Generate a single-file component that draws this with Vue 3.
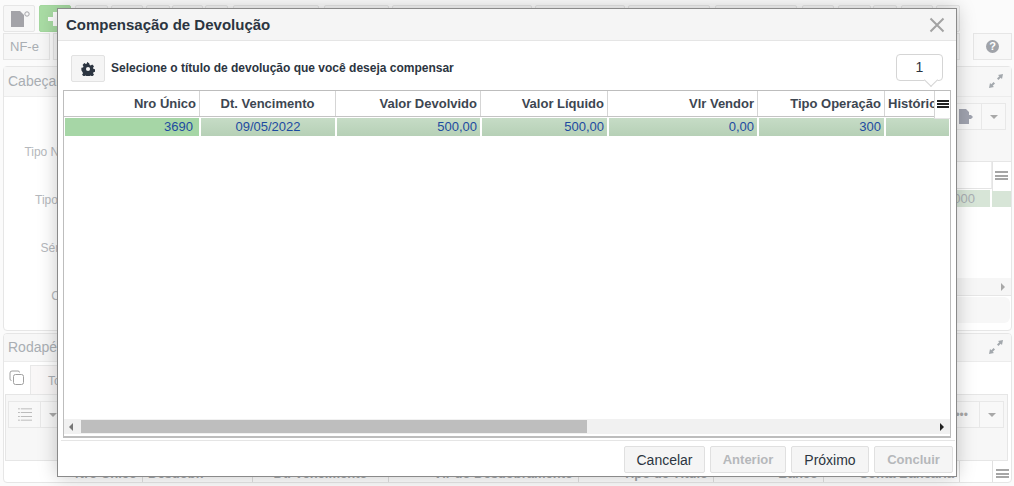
<script setup>
const edges = [
  [75, 108], [111, 143], [146, 170], [172, 203], [205, 228], [233, 319], [324, 389], [392, 532],
  [535, 625], [628, 710], [715, 797], [802, 834], [838, 871], [873, 897], [901, 933], [936, 960]
]
const topButtons = edges.map(([start, end], i) => ({
  width: end - start,
  gap: start - (i ? edges[i - 1][1] : 71)
}))
const labels = ['Tipo Negociação', 'Tipo Operação', 'Série da Nota', 'Cód. Banco']
const footerColumns = [
  { label: 'Nro Único', width: 139, align: 'right' },
  { label: 'Desdobr.', width: 110, align: 'left' },
  { label: 'Dt. Vencimento', width: 136, align: 'center' },
  { label: 'Vlr do Desdobramento', width: 190, align: 'right' },
  { label: 'Tipo de Título', width: 135, align: 'right' },
  { label: 'Banco', width: 110, align: 'right' },
  { label: 'Conta Bancária', width: 136, align: 'right' },
  { label: '', width: 33, align: 'left' }
]
const columns = [
  { label: 'Nro Único', value: '3690', width: 136, align: 'right', first: true },
  { label: 'Dt. Vencimento', value: '09/05/2022', width: 136, align: 'center' },
  { label: 'Valor Devolvido', value: '500,00', width: 145, align: 'right' },
  { label: 'Valor Líquido', value: '500,00', width: 127, align: 'right' },
  { label: 'Vlr Vendor', value: '0,00', width: 150, align: 'right' },
  { label: 'Tipo Operação', value: '300', width: 127, align: 'right' },
  { label: 'Histórico', value: '', width: 65, align: 'left' }
]
const actions = [
  { label: 'Cancelar', width: 81 },
  { label: 'Anterior', width: 76, disabled: true },
  { label: 'Próximo', width: 78 },
  { label: 'Concluir', width: 79, disabled: true }
]
</script>

<template>
  <div class="page">
    <div class="backdrop">
      <div class="top-row">
        <button class="tool doc-tool">
          <svg width="22" height="18" viewBox="0 0 22 18"><path d="M1 1h9l4 4v12H1z" fill="#a3a3a8" /><circle cx="17" cy="4" r="2.2" fill="none" stroke="#a3a3a8" stroke-width="1" /></svg>
        </button>
        <button class="tool add-tool"><span class="plus"></span></button>
        <button
          v-for="(b, i) in topButtons"
          :key="i"
          class="tool"
          :style="{ width: b.width + 'px', marginLeft: b.gap + 'px' }"
        ></button>
      </div>
      <div class="nf-row">
        <span class="nf-tab">NF-e</span>
        <span class="nf-fill">
          <svg width="16" height="16" viewBox="0 0 16 16" fill="none" stroke="#a3a3a8" stroke-width="2"><circle cx="8" cy="8" r="6" /></svg>
        </span>
        <button class="help-btn"><span class="help">?</span></button>
      </div>

      <section class="panel head-panel">
        <header class="panel-title">
          <span>Cabeçalho</span>
          <svg class="expand" width="14" height="14" viewBox="0 0 14 14"><path d="M14 0l-5 1 1.300 1.300L8 4.600 9.400 6l2.300-2.300L13 5zM0 14l5-1-1.300-1.300L6 9.400 4.600 8l-2.300 2.300L1 9z" fill="#a3a8ad" /></svg>
        </header>
        <div class="head-body">
          <div class="labels">
            <span v-for="label in labels" :key="label">{{ label }}</span>
          </div>
          <div class="head-right">
            <div class="side-tools">
              <div class="split-btn">
                <svg width="15" height="15" viewBox="0 0 15 15"><path d="M1 0h7l3 3v3h2l2 2-2 2h-2v5H1z" fill="#a0a3af" /></svg>
                <i class="divider"></i>
                <span class="caret"></span>
              </div>
            </div>
            <div class="side-head">
              <span class="side-blank"></span>
              <span class="side-menu"><span class="bars"></span></span>
            </div>
            <div class="side-row"><span>000</span><i></i></div>
            <div class="side-space"></div>
            <div class="side-scroll"><span class="side-arrow"></span></div>
            <div class="side-foot"></div>
          </div>
        </div>
      </section>

      <section class="panel foot-panel">
        <header class="panel-title short">
          <span>Rodapé</span>
          <svg class="expand" width="14" height="14" viewBox="0 0 14 14"><path d="M14 0l-5 1 1.300 1.300L8 4.600 9.400 6l2.300-2.300L13 5zM0 14l5-1-1.300-1.300L6 9.400 4.600 8l-2.300 2.300L1 9z" fill="#a3a8ad" /></svg>
        </header>
        <div class="tabs">
          <svg width="16" height="16" viewBox="0 0 16 16" fill="none" stroke="#a0a0a0"><rect x="4.500" y="4.500" width="10" height="10" rx="2" /><path d="M2.500 10.500A1.500 1.500 0 0 1 1 9V3a2 2 0 0 1 2-2h6a1.500 1.500 0 0 1 1.500 1.500" /></svg>
          <span class="tab">Todos</span>
        </div>
        <div class="foot-tools">
          <div class="split-btn list-btn">
            <svg width="15" height="13" viewBox="0 0 15 13" fill="#a8a8a8"><path d="M0 0h2v1H0zM3 0h12v1H3zM0 4h2v1H0zM3 4h12v1H3zM0 8h2v1H0zM3 8h12v1H3zM0 12h2v1H0zM3 12h12v1H3z" /></svg>
            <i class="divider"></i>
            <span class="caret"></span>
          </div>
          <div class="split-btn more-btn">
            <span class="dots">•••</span>
            <i class="divider"></i>
            <span class="caret"></span>
          </div>
        </div>
        <div class="foot-head">
          <span
            v-for="c in footerColumns"
            :key="c.label"
            class="foot-col"
            :class="'a-' + c.align"
            :style="{ width: c.width + 'px' }"
          >{{ c.label }}</span>
          <span class="foot-menu"><span class="bars"></span></span>
        </div>
      </section>
    </div>

    <div class="modal">
      <header class="modal-head">
        <h1>Compensação de Devolução</h1>
        <svg class="close" width="16" height="16" viewBox="0 0 16 16" fill="none" stroke="#a3a3a3" stroke-width="2"><path d="M1.500 1.500l13 13M14.500 1.500l-13 13" /></svg>
      </header>
      <div class="modal-body">
        <div class="intro">
          <button class="gear-btn">
            <svg width="14" height="14" viewBox="0 0 24 24"><path fill-rule="evenodd" fill="#2c3541" d="M14.500 1l.7 3.300 2 .8 2.900-1.800 3.500 3.500-1.800 2.900.8 2 3.300.7v5l-3.300.7-.8 2 1.800 2.900-3.500 3.500-2.900-1.800-2 .8-.7 3.300h-5l-.7-3.300-2-.8-2.900 1.800-3.500-3.500 1.800-2.900-.8-2L-1 14.500v-5l3.300-.7.800-2L1.300 3.900 4.800.4l2.900 1.800 2-.8.7-3.300zM12 8a4 4 0 1 0 0 8 4 4 0 0 0 0-8z" transform="translate(1.500 1.500) scale(.88)" /></svg>
          </button>
          <span class="intro-text">Selecione o título de devolução que você deseja compensar</span>
          <div class="count">1</div>
        </div>

        <div class="grid">
          <div class="grid-head">
            <div v-for="c in columns" :key="c.label" class="hcell" :class="'a-' + c.align" :style="{ width: c.width + 'px' }">{{ c.label }}</div>
            <div class="grid-menu"><span class="bars dark"></span></div>
          </div>
          <div class="grid-row">
            <div v-for="c in columns" :key="c.label" class="cell" :class="['a-' + c.align, { first: c.first }]" :style="{ width: c.width + 'px' }">{{ c.value }}</div>
          </div>
          <div class="grid-space"></div>
          <div class="scrollbar">
            <span class="arrow left"></span>
            <div class="track"><div class="thumb"></div></div>
            <span class="arrow right"></span>
          </div>
        </div>

        <footer class="actions">
          <button v-for="a in actions" :key="a.label" class="action" :class="{ disabled: a.disabled }" :style="{ width: a.width + 'px' }">{{ a.label }}</button>
        </footer>
      </div>
    </div>
  </div>
</template>

<style>
html, body { margin: 0; padding: 0; background: #fff; overflow: hidden; }
</style>

<style scoped>
.page {
  position: relative;
  width: 1014px;
  height: 486px;
  overflow: hidden;
  background: #fbfbfb;
  font-family: "Liberation Sans", Arial, sans-serif;
  color: #2c3541;
}
button { font-family: inherit; padding: 0; }

/* dimmed page behind the dialog */
.backdrop {
  display: flex;
  flex-direction: column;
  height: 486px;
  padding: 5px 2px 3px 3px;
  box-sizing: border-box;
  color: #a9aeb3;
}
.top-row { display: flex; height: 28px; flex: none; }
.tool {
  flex: none;
  width: 32px;
  height: 27px;
  box-sizing: border-box;
  border: 1px solid #e6e6e6;
  border-radius: 2px;
  background: #f7f7f7;
  display: flex;
  align-items: center;
  justify-content: center;
}
.doc-tool { padding-left: 3px; }
.add-tool { background: #a9dca4; border-color: #a4d89f; margin-left: 4px; }
.plus {
  width: 14px;
  height: 14px;
  background:
    linear-gradient(#fff, #fff) center / 14px 4px no-repeat,
    linear-gradient(#fff, #fff) center / 4px 14px no-repeat;
}
.nf-row { display: flex; gap: 3px; height: 27px; flex: none; }
.nf-tab {
  width: 47px;
  height: 27px;
  box-sizing: border-box;
  border: 1px solid #e6e6e6;
  background: #f7f7f7;
  padding-left: 6px;
  font-size: 13px;
  line-height: 25px;
}
.nf-fill {
  flex: 1;
  margin-right: 10px;
  border: 1px solid #e6e6e6;
  height: 27px;
  box-sizing: border-box;
  background: #f7f7f7;
  display: flex;
  align-items: center;
  justify-content: flex-end;
  padding-right: 1px;
}
.help-btn {
  width: 39px;
  height: 27px;
  box-sizing: border-box;
  border: 1px solid #e6e6e6;
  background: #f8f8f8;
  display: flex;
  align-items: center;
  justify-content: center;
}
.help {
  width: 13px;
  height: 13px;
  border-radius: 50%;
  background: #a0a3a9;
  color: #fff;
  font-size: 11px;
  font-weight: 700;
  line-height: 13px;
  text-align: center;
}
.panel {
  border: 1px solid #e6e6e6;
  border-radius: 4px;
  background: #fff;
  box-sizing: border-box;
}
.panel-title {
  height: 30px;
  flex: none;
  box-sizing: border-box;
  background: #f7f7f7;
  border-bottom: 1px solid #ececec;
  padding: 0 8px 2px 4px;
  display: flex;
  align-items: center;
  justify-content: space-between;
  font-size: 14px;
}
.head-panel { height: 265px; margin-top: 6px; display: flex; flex-direction: column; }
.head-body { flex: 1; min-height: 0; display: flex; justify-content: space-between; }
.labels {
  width: 110px;
  display: flex;
  flex-direction: column;
  align-items: flex-end;
  gap: 33px;
  padding-top: 48px;
  font-size: 12px;
  line-height: 15px;
  color: #b5b8bc;
}
.head-right { width: 61px; display: flex; flex-direction: column; }
.side-tools {
  height: 65px;
  flex: none;
  box-sizing: border-box;
  background: #f7f7f7;
  border-bottom: 1px solid #e6e6e6;
  padding: 6px 5px 0 0;
  display: flex;
  justify-content: flex-end;
  align-items: flex-start;
}
.split-btn {
  display: flex;
  align-items: center;
  height: 27px;
  border: 1px solid #e8e8e8;
  box-sizing: border-box;
  background: #f8f8f8;
}
.side-tools .split-btn { width: 56px; justify-content: flex-end; }
.divider { width: 1px; height: 100%; background: #e8e8e8; margin: 0 8px; flex: none; }
.caret {
  flex: none;
  width: 0;
  height: 0;
  border: 4px solid transparent;
  border-top: 4px solid #a8a8a8;
  border-bottom: 0;
  margin-right: 7px;
}
.side-head { height: 27px; flex: none; display: flex; }
.side-blank { flex: 1; border-bottom: 1px solid #e4e4e4; box-sizing: border-box; height: 27px; border-right: 1px solid #ececec; }
.side-menu {
  width: 19px;
  height: 29px;
  box-sizing: border-box;
  border-left: 1px solid #e4e4e4;
  background: #fff;
  display: flex;
  justify-content: center;
  padding: 9px 2px 0 0;
  position: relative;
  z-index: 1;
}
.bars {
  display: block;
  box-sizing: border-box;
  width: 13px;
  height: 9px;
  border-top: 2px solid #a6a6a6;
  border-bottom: 2px solid #a6a6a6;
  background: linear-gradient(#a6a6a6, #a6a6a6) center / 100% 2px no-repeat;
}
.bars.dark { width: 12px; height: 8px; border-color: #222; background-image: linear-gradient(#222, #222); }
.side-row {
  display: flex;
  height: 17px;
  flex: none;
  margin-top: 1px;
  gap: 2px;
  font-size: 13px;
  line-height: 17px;
}
.side-row span { width: 40px; flex: none; background: #d7e5d7; text-align: right; padding-right: 15px; box-sizing: border-box; color: #a9aeb3; }
.side-row i { flex: 1; background: #d7e5d7; }
.side-space { flex: 1; }
.side-scroll {
  height: 18px;
  flex: none;
  box-sizing: border-box;
  background: #f6f6f6;
  border-bottom: 1px solid #e6e6e6;
  display: flex;
  align-items: center;
  justify-content: flex-end;
  padding-right: 6px;
}
.side-arrow { border: 4px solid transparent; border-left: 4px solid #a8a8a8; border-right: 0; }
.side-foot { height: 26px; flex: none; margin: 1px 1px 7px 0; background: #f7f7f7; border-radius: 0 6px 6px 0; }
.foot-panel { flex: 1; min-height: 0; margin-top: 2px; display: flex; flex-direction: column; overflow: hidden; }
.panel-title.short { height: 28px; }
.tabs { display: flex; align-items: center; height: 32px; flex: none; padding-left: 5px; gap: 5px; box-sizing: border-box; }
.tab {
  align-self: flex-end;
  width: 60px;
  height: 29px;
  box-sizing: border-box;
  border: 1px solid #e8e8e8;
  border-bottom: 0;
  background: #f9f7f7;
  padding: 8px 0 0 17px;
  font-size: 12px;
}
.foot-tools {
  height: 67px;
  flex: none;
  box-sizing: border-box;
  background: #f7f7f7;
  border: 1px solid #e6e6e6;
  margin: 0 3px 0 1px;
  padding: 6px 3px 0 2px;
  display: flex;
  justify-content: space-between;
  align-items: flex-start;
}
.list-btn { width: 57px; padding-left: 9px; }
.more-btn { width: 70px; justify-content: flex-end; }
.dots { font-size: 12px; color: #a8a8a8; margin-right: 3px; }
.foot-head { display: flex; flex: 1; min-height: 0; font-size: 13px; font-weight: 700; }
.foot-col {
  flex: none;
  height: 100%;
  padding: 6px 5px 0;
  line-height: 14px;
  border-right: 1px solid #e0e0e0;
  box-sizing: border-box;
  color: #a3a7ab;
  white-space: nowrap;
}
.foot-menu { flex: 1; display: flex; justify-content: center; padding-top: 8px; box-sizing: border-box; }

/* dialog */
.modal {
  position: absolute;
  left: 57px;
  top: 8px;
  width: 900px;
  height: 469px;
  box-sizing: border-box;
  background: #fff;
  border: 1px solid #8a8a8a;
  box-shadow: 0 0 18px rgba(0, 0, 0, 0.22);
  display: flex;
  flex-direction: column;
}
.modal-head {
  height: 32px;
  flex: none;
  box-sizing: border-box;
  background: #f5f5f5;
  border-bottom: 1px solid #e5e5e5;
  padding: 0 11px 0 8px;
  display: flex;
  align-items: center;
  justify-content: space-between;
}
h1 { margin: 0; font-size: 15px; font-weight: 700; color: #2c3541; }
.close { display: block; }
.modal-body { flex: 1; min-height: 0; display: flex; flex-direction: column; padding: 0 3px 0 5px; position: relative; }
.intro { height: 49px; flex: none; display: flex; align-items: flex-start; position: relative; }
.gear-btn {
  margin: 14px 0 0 8px;
  width: 34px;
  height: 27px;
  border: 1px solid #e2e2e2;
  border-radius: 2px;
  background: #f5f5f5;
  display: flex;
  align-items: center;
  justify-content: center;
}
.intro-text { margin: 20px 0 0 6px; font-size: 12px; font-weight: 700; line-height: 14px; color: #2c3541; white-space: nowrap; }
.count {
  position: absolute;
  left: 833px;
  top: 13px;
  width: 47px;
  height: 27px;
  box-sizing: border-box;
  border: 1px solid #d5d5d5;
  border-radius: 4px;
  background: #fff;
  font-size: 14px;
  line-height: 25px;
  text-align: center;
  z-index: 2;
}
.count::after {
  content: "";
  position: absolute;
  left: 29px;
  bottom: -5px;
  width: 9px;
  height: 9px;
  background: #fff;
  border-right: 1px solid #d5d5d5;
  border-bottom: 1px solid #d5d5d5;
  transform: rotate(45deg);
}
.grid {
  width: 888px;
  height: 348px;
  flex: none;
  box-sizing: border-box;
  border: 1px solid #bdbdbd;
  border-bottom-width: 2px;
  display: flex;
  flex-direction: column;
  position: relative;
  overflow: hidden;
}
.grid-head { display: flex; height: 26px; flex: none; border-bottom: 1px solid #c4c4c4; box-sizing: border-box; position: relative; }
.hcell {
  flex: none;
  box-sizing: border-box;
  border-right: 1px solid #d5d5d5;
  padding: 0 3px;
  font-size: 13px;
  font-weight: 700;
  line-height: 25px;
  white-space: nowrap;
  overflow: hidden;
  color: #3d4651;
  background: #fff;
}
.a-right { text-align: right; }
.a-center { text-align: center; }
.a-left { text-align: left; }
.grid-menu {
  position: absolute;
  right: 0;
  top: 0;
  width: 16px;
  height: 28px;
  background: #fff;
  border-left: 1px solid #d5d5d5;
  border-bottom: 1px solid #e5e5e5;
  box-sizing: border-box;
  display: flex;
  align-items: center;
  justify-content: center;
  padding-bottom: 2px;
  z-index: 1;
}
.grid-row { display: flex; height: 18px; flex: none; margin-top: 1px; }
.cell {
  flex: none;
  box-sizing: border-box;
  height: 18px;
  padding: 0 3px;
  font-size: 13px;
  line-height: 18px;
  color: #1d4ba0;
  background: linear-gradient(#c6dcc6, #b6d0b6);
  background-clip: padding-box;
  border-left: 1px solid #fff;
  border-right: 1px solid #fff;
}
.cell.first { background: #a6d6a6; background-clip: padding-box; padding-right: 6px; }
.grid-space { flex: 1; }
.scrollbar { height: 15px; flex: none; background: #f1f1f1; display: flex; align-items: center; margin-bottom: 2px; }
.arrow { border: 4px solid transparent; flex: none; }
.arrow.left { border-right: 4px solid #777; border-left: 0; margin: 0 8px 0 5px; }
.arrow.right { border-left: 4px solid #222; border-right: 0; margin: 0 6px 0 8px; }
.track { flex: 1; height: 13px; }
.thumb { width: 506px; height: 13px; background: #bebebe; }
.actions {
  flex: none;
  margin: 2px -2px 0 -2px;
  border-top: 1px solid #e5e5e5;
  display: flex;
  justify-content: flex-end;
  gap: 5px;
  padding: 5px 2px 0 0;
}
.action {
  height: 27px;
  flex: none;
  box-sizing: border-box;
  border: 1px solid #e0e0e0;
  border-radius: 2px;
  background: #f5f5f5;
  font-size: 14px;
  color: #2c3541;
}
.action.disabled { color: #b5b8bb; font-size: 13px; font-weight: 700; }
</style>
